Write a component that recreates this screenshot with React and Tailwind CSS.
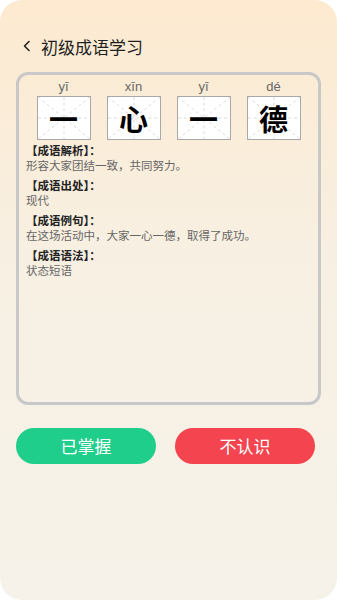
import React from 'react';

const font = { fontFamily: '"Noto Sans CJK SC", "Noto Sans", sans-serif' };

const chars = [
  { py: 'yī', ch: '一' },
  { py: 'xīn', ch: '心' },
  { py: 'yī', ch: '一' },
  { py: 'dé', ch: '德' },
];

const sections = [
  { label: '【成语解析】：', text: '形容大家团结一致，共同努力。' },
  { label: '【成语出处】：', text: '现代' },
  { label: '【成语例句】：', text: '在这场活动中，大家一心一德，取得了成功。' },
  { label: '【成语语法】：', text: '状态短语' },
];

// 田字格 style grid behind each character
const GridLines = () => (
  <svg className="absolute inset-0 h-full w-full" viewBox="0 0 54 44" preserveAspectRatio="none">
    <g stroke="#cfcfcf" strokeWidth="0.8" strokeDasharray="3 3" fill="none">
      <line x1="0" y1="0" x2="54" y2="44" />
      <line x1="54" y1="0" x2="0" y2="44" />
      <line x1="27" y1="0" x2="27" y2="44" />
      <line x1="0" y1="22" x2="54" y2="22" />
    </g>
  </svg>
);

export default function App() {
  return (
    <div className="h-[600px] w-full bg-white" style={font}>
      <div className="flex h-full flex-col overflow-hidden rounded-[22px] bg-gradient-to-b from-[#fdead0] via-[#f7f0e3] via-45% to-[#f6f2e9]">
        {/* Header */}
        <div className="mt-[36px] flex h-[20px] items-center pl-[22px]">
          <svg width="10" height="12" viewBox="0 0 10 12" className="mr-[9px]">
            <path d="M7 1.5 L2.5 6 L7 10.5" stroke="#222" strokeWidth="1.6" fill="none" strokeLinecap="round" strokeLinejoin="round" />
          </svg>
          <span className="text-[17px] leading-none text-[#1f1f1f]">初级成语学习</span>
        </div>

        {/* Idiom card */}
        <div className="mx-[16px] mt-[16px] h-[333px] rounded-[12px] border-[3px] border-[#c8c8c8] px-[7px] pt-[3px]">
          <div className="flex justify-center gap-[16px]">
            {chars.map((c, i) => (
              <div key={i} className="flex flex-col items-center">
                <span className="h-[18px] text-[13px] leading-[18px] text-[#666]" style={{ fontFamily: '"Liberation Sans", sans-serif' }}>{c.py}</span>
                <div className="relative flex h-[44px] w-[54px] items-center justify-center border border-[#a8a8a8] bg-white">
                  <GridLines />
                  <span className="relative text-[29px] font-bold leading-none text-black">{c.ch}</span>
                </div>
              </div>
            ))}
          </div>

          <div className="mt-[3px] flex flex-col gap-[5px]">
            {sections.map((s, i) => (
              <div key={i} className="flex flex-col">
                <span className="text-[11.5px] font-bold leading-[15px] text-[#222]">{s.label}</span>
                <span className="text-[11.5px] leading-[15px] text-[#666]">{s.text}</span>
              </div>
            ))}
          </div>
        </div>

        {/* Actions */}
        <div className="mt-[23px] flex justify-between px-[16px]">
          <button className="h-[36px] w-[140px] rounded-full bg-[#20ce8b] text-[17px] text-white">已掌握</button>
          <button className="mr-[6px] h-[36px] w-[140px] rounded-full bg-[#f4444f] text-[17px] text-white">不认识</button>
        </div>
      </div>
    </div>
  );
}
